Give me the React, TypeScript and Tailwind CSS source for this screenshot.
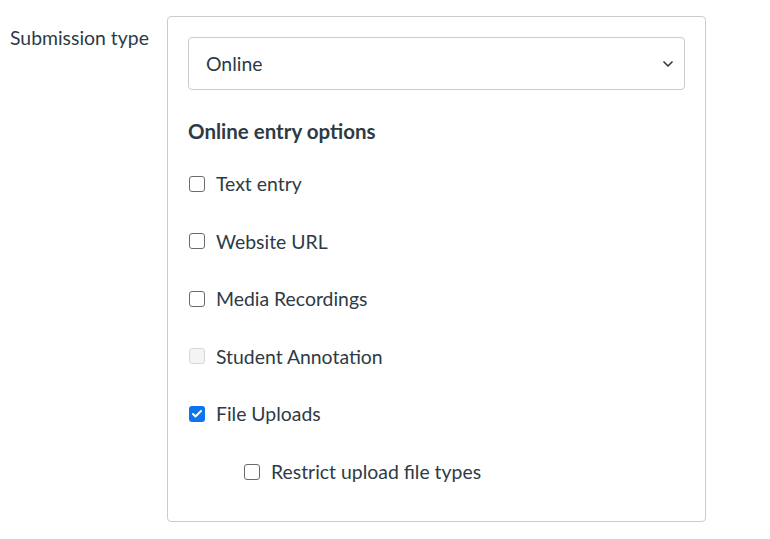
import { ChevronDown, Check } from 'lucide-react'

function Box({ state }: { state: 'off' | 'on' | 'disabled' }) {
  if (state === 'on')
    return (
      <span className="grid h-4 w-4 place-items-center rounded-[3px] bg-[#0b74f0]">
        <Check size={12} strokeWidth={4} className="text-white" />
      </span>
    )
  return (
    <span
      className={
        state === 'disabled'
          ? 'h-4 w-4 rounded-[3px] border border-[#d8d8d8] bg-[#f4f4f4]'
          : 'h-4 w-4 rounded-[3px] border-[1.5px] border-[#6b6b6b] bg-white'
      }
    />
  )
}

function Row({ label, state = 'off', indent = false }: { label: string; state?: 'off' | 'on' | 'disabled'; indent?: boolean }) {
  return (
    <div className={'flex h-[57.6px] items-center gap-[11px] ' + (indent ? 'pl-[56px]' : 'pl-[1px]')}>
      <Box state={state} />
      <span className="text-[19.4px] text-[#2d3b45]">{label}</span>
    </div>
  )
}

export default function App() {
  return (
    <div className="flex h-[539px] w-[770px] bg-white pt-4" style={{ fontFamily: 'Lato, "Noto Sans", sans-serif' }}>
      <div className="w-[167px] shrink-0 pl-[10px] pt-[7px] text-[19.4px] text-[#2d3b45]">Submission type</div>
      <div className="h-[506px] w-[539px] rounded-[4px] border border-[#c7cdd1] px-5 pt-5">
        <div className="flex h-[53px] items-center justify-between rounded-[4px] border border-[#c7cdd1] pl-[17px] pr-[8px] text-[19.4px] text-[#2d3b45]">
          Online
          <ChevronDown size={16} strokeWidth={2.5} className="text-[#2d3b45]" />
        </div>
        <div className="mt-[26px] text-[20.5px] font-bold text-[#2d3b45]">Online entry options</div>
        <div className="mt-[8px]">
          <Row label="Text entry" />
          <Row label="Website URL" />
          <Row label="Media Recordings" />
          <Row label="Student Annotation" state="disabled" />
          <Row label="File Uploads" state="on" />
          <Row label="Restrict upload file types" indent />
        </div>
      </div>
    </div>
  )
}
